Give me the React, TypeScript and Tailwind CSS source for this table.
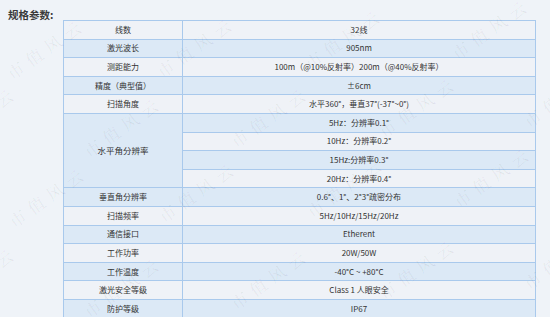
import React from "react";

const rows: { k: string; v: string }[] = [
  { k: "线数", v: "32线" },
  { k: "激光波长", v: "905nm" },
  { k: "测距能力", v: "100m（@10%反射率）200m（@40%反射率）" },
  { k: "精度（典型值）", v: "±6cm" },
  { k: "扫描角度", v: "水平360°，垂直37°(-37°~0°)" },
];

const sub = ["5Hz：分辨率0.1°", "10Hz：分辨率0.2°", "15Hz:分辨率0.3°", "20Hz：分辨率0.4°"];

const rows2: { k: string; v: string }[] = [
  { k: "垂直角分辨率", v: "0.6°、1°、2°3°疏密分布" },
  { k: "扫描频率", v: "5Hz/10Hz/15Hz/20Hz" },
  { k: "通信接口", v: "Etherent" },
  { k: "工作功率", v: "20W/50W" },
  { k: "工作温度", v: "-40°C ~ +80°C" },
  { k: "激光安全等级", v: "Class 1 人眼安全" },
  { k: "防护等级", v: "IP67" },
];

const marks = [
  [8, 62], [158, 60], [306, 52], [453, 42],
  [-60, 130], [85, 140], [232, 130], [380, 120], [525, 110],
  [10, 210], [160, 205], [308, 200], [455, 190],
  [-60, 290], [85, 300], [232, 292], [380, 282], [525, 272],
];

const blue = "bg-[#dce9f6]";
const light = "bg-[#eff2f7]";
const cell = "border border-[#a9c9ec] h-[18.6px] p-0 text-center align-middle leading-none";

export default function App() {
  return (
    <div
      className="relative w-[550px] h-[317px] overflow-hidden bg-[#eff3f8] text-[#333]"
      style={{ fontFamily: '"Noto Sans CJK SC", "Noto Sans", sans-serif' }}
    >
      <div className="pl-[8px] pt-[9px] h-[20px] text-[10.5px] font-bold leading-[12px] text-[#3a3a3a]">
        规格参数:
      </div>
      <div className="pl-[63px]">
        <table className="w-[473px] table-fixed border-collapse text-[8px]">
          <colgroup>
            <col className="w-[119px]" />
            <col />
          </colgroup>
          <tbody>
            {rows.map((r, i) => (
              <tr key={r.k} className={i % 2 ? blue : light}>
                <td className={cell}>{r.k}</td>
                <td className={cell}>{r.v}</td>
              </tr>
            ))}
            {sub.map((s, i) => (
              <tr key={s} className={i % 2 ? light : blue}>
                {i === 0 && (
                  <td rowSpan={4} className={`${cell} ${blue} text-[8.5px]`}>
                    水平角分辨率
                  </td>
                )}
                <td className={cell}>{s}</td>
              </tr>
            ))}
            {rows2.map((r, i) => (
              <tr key={r.k} className={i % 2 ? light : blue}>
                <td className={cell}>{r.k}</td>
                <td className={cell}>{r.v}</td>
              </tr>
            ))}
          </tbody>
        </table>
      </div>
      {marks.map(([x, y], i) => (
        <div
          key={i}
          className="pointer-events-none absolute origin-left -rotate-[35deg] whitespace-nowrap text-[17px] tracking-[6px] text-[#000]/[0.06]"
          style={{ left: x, top: y, fontFamily: '"Noto Serif CJK SC", "Noto Sans CJK SC", serif' }}
        >
          市值风云
        </div>
      ))}
    </div>
  );
}
